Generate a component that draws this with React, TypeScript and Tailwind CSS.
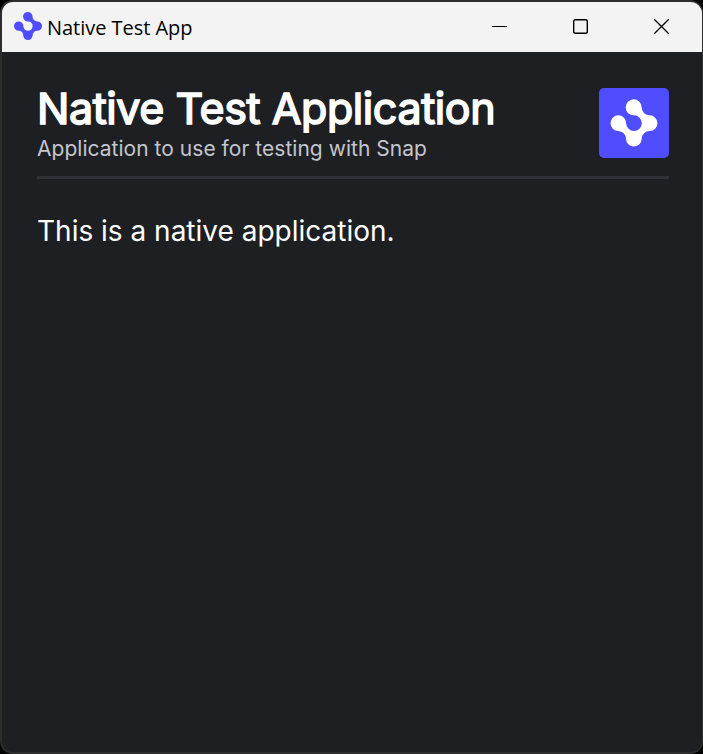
const LOGO =
  "M132 106A24 24 0 1 1 155 82A24 24 0 0 0 179 106A23.5 23.5 0 0 1 179 153A24 24 0 0 0 155 176A23.5 23.5 0 0 1 108 176A24 24 0 0 0 85 153A23.5 23.5 0 1 1 108.5 129.5A23.5 23.5 0 1 0 132 106Z";

function TitleBar() {
  return (
    <header className="flex h-[50px] shrink-0 items-center bg-[#f3f3f3] pl-3 text-black">
      <svg viewBox="61.5 58.5 141 141" className="mb-[2px] size-7" fill="#4f4dff">
        <path d={LOGO} />
      </svg>
      <span className="mt-[2px] ml-[5px] font-['Open_Sans','Noto_Sans',sans-serif] text-[20px] leading-[28px] tracking-[-0.04px] whitespace-nowrap">
        Native Test App
      </span>
      <div className="ml-auto flex h-full pb-px">
        <div className="flex w-[81px] items-center justify-center">
          <svg width="15" height="15" stroke="#000" fill="none">
            <path d="M0 7.5H15" />
          </svg>
        </div>
        <div className="flex w-[81px] items-center justify-center">
          <svg width="15" height="15" stroke="#000" strokeWidth="1.4" fill="none">
            <rect x="0.7" y="0.7" width="13.6" height="13.6" rx="1.5" />
          </svg>
        </div>
        <div className="flex w-[81px] items-center justify-center">
          <svg width="15" height="15" stroke="#000" strokeWidth="1.3" fill="none">
            <path d="M0.3 0.3L14.7 14.7M14.7 0.3L0.3 14.7" />
          </svg>
        </div>
      </div>
    </header>
  );
}

export default function App() {
  return (
    <div className="h-[754px] w-[703px] bg-black">
      <div className="flex h-full w-full flex-col overflow-hidden rounded-[13px] border-2 border-r-1 border-[#2d2d2d] bg-[#1e1f23]">
        <TitleBar />
        <main className="flex flex-col pt-9 pr-[33px] pl-[35px] font-['Inter',sans-serif]">
          <div className="flex h-[91px] items-start justify-between border-b-3 border-[#303136]">
            <div className="flex flex-col whitespace-nowrap">
              <h1 className="h-[47px] text-[43px] leading-[40px] font-normal tracking-[-0.42px] text-white [-webkit-text-stroke:1.6px_#fff]">
                Native Test Application
              </h1>
              <p className="text-[21px] leading-[28px] tracking-[0.03px] text-[#c4c5cd]">
                Application to use for testing with Snap
              </p>
            </div>
            <svg viewBox="27 24 210 210" className="size-[70px] rounded-[5px] bg-[#4f4dff]" fill="#fff">
              <path d={LOGO} />
            </svg>
          </div>
          <p className="mt-[34px] text-[28px] leading-[36px] whitespace-nowrap text-white">
            This is a native application.
          </p>
        </main>
      </div>
    </div>
  );
}
